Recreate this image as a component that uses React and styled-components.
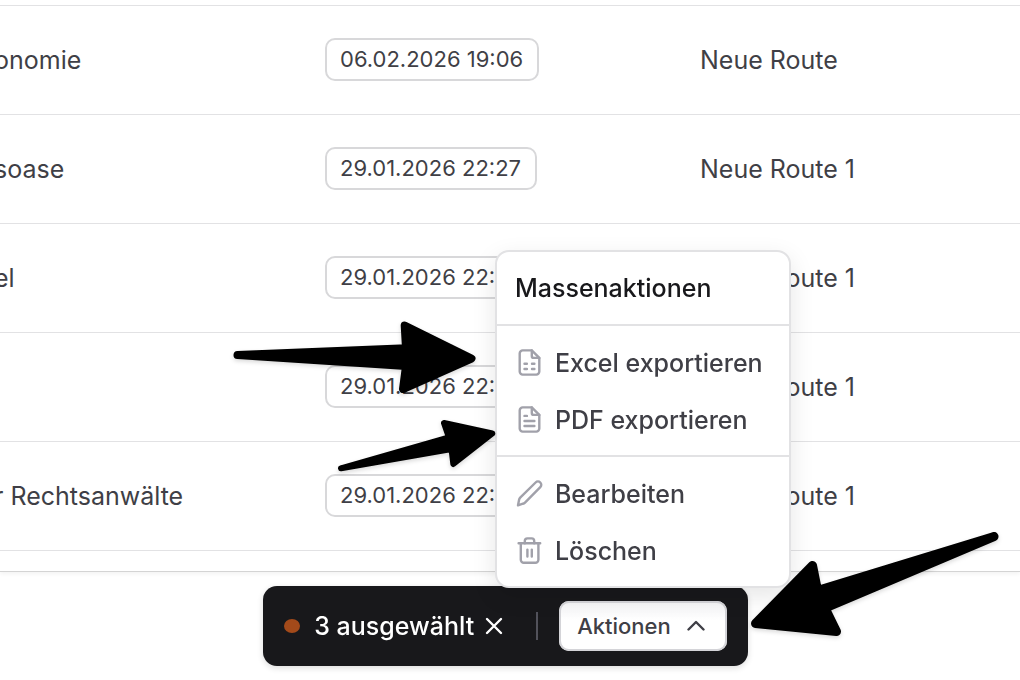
import styled, { createGlobalStyle } from 'styled-components';

const rows = [
  { name: 'onomie', date: '06.02.2026 19:06', route: 'Neue Route' },
  { name: 'soase', date: '29.01.2026 22:27', route: 'Neue Route 1' },
  { name: 'el', date: '29.01.2026 22:27', route: 'Neue Route 1' },
  { name: '', date: '29.01.2026 22:27', route: 'Neue Route 1' },
  { name: 'r Rechtsanwälte', date: '29.01.2026 22:27', route: 'Neue Route 1' },
];

const arrows = [
  {
    left: 233,
    top: 320,
    width: 244,
    height: 76,
    stroke: 8,
    points: '4.5,35 173,28.3 171.7,5.5 238.5,38.5 170,69 173,46',
  },
  {
    left: 336,
    top: 418,
    width: 160,
    height: 52,
    stroke: 6,
    points: '5,50.3 113,19.5 108,5 156.3,15.5 117.3,46 115.5,31',
  },
  {
    left: 749,
    top: 530,
    width: 252,
    height: 108,
    stroke: 9,
    points: '245,6.5 68.5,60.5 63.5,35.5 6.5,93.5 87.5,101.5 76,78',
  },
];

function App() {
  return (
    <>
      <GlobalStyle />
      <Page>
        <TableCard>
          <Table>
            <colgroup>
              <col className="name" />
              <col className="date" />
              <col />
            </colgroup>
            <tbody>
              {rows.map((row, index) => (
                <tr key={index}>
                  <td>{row.name}</td>
                  <td>
                    <DateBadge>{row.date}</DateBadge>
                  </td>
                  <td>{row.route}</td>
                </tr>
              ))}
            </tbody>
          </Table>
        </TableCard>
      </Page>
      <Dock>
        <SelectionBar>
          <Dot />
          <Count>3 ausgewählt</Count>
          <ClearButton aria-label="Auswahl aufheben">
            <CloseIcon />
          </ClearButton>
          <Divider />
          <ActionMenu />
        </SelectionBar>
      </Dock>
      {arrows.map((arrow) => (
        <Arrow key={arrow.left} {...arrow} />
      ))}
    </>
  );
}

function ActionMenu() {
  return (
    <MenuAnchor>
      <ActionButton aria-haspopup="menu" aria-expanded="true">
        Aktionen
        <ChevronIcon />
      </ActionButton>
      <Menu role="menu" aria-label="Massenaktionen">
        <MenuTitle>Massenaktionen</MenuTitle>
        <MenuSection>
          <MenuItem role="menuitem">
            <SheetIcon />
            Excel exportieren
          </MenuItem>
          <MenuItem role="menuitem">
            <DocumentIcon />
            PDF exportieren
          </MenuItem>
        </MenuSection>
        <MenuSection>
          <MenuItem role="menuitem">
            <PencilIcon />
            Bearbeiten
          </MenuItem>
          <MenuItem role="menuitem">
            <TrashIcon />
            Löschen
          </MenuItem>
        </MenuSection>
      </Menu>
    </MenuAnchor>
  );
}

function Arrow({ left, top, width, height, stroke, points }) {
  return (
    <ArrowSvg $left={left} $top={top} width={width} height={height} aria-hidden="true">
      <polygon points={points} strokeWidth={stroke} />
    </ArrowSvg>
  );
}

function SheetIcon() {
  return (
    <Icon viewBox="0 0 28 28">
      <path d="M16.8 1.4H7.7a3 3 0 0 0-3 3v18.2a3 3 0 0 0 3 3h13.6a3 3 0 0 0 3-3V8.9z" />
      <path d="M16.8 1.4v5.5a2 2 0 0 0 2 2h5.5" />
      <path d="M9.5 14.8h2.4M17 14.8h2.4M9.5 20h2.4M17 20h2.4" />
    </Icon>
  );
}

function DocumentIcon() {
  return (
    <Icon viewBox="0 0 28 28">
      <path d="M16.8 1.4H7.7a3 3 0 0 0-3 3v18.2a3 3 0 0 0 3 3h13.6a3 3 0 0 0 3-3V8.9z" />
      <path d="M16.8 1.4v5.5a2 2 0 0 0 2 2h5.5" />
      <path d="M9.5 9.9h2.4M9.5 15h9.9M9.5 20h9.9" />
    </Icon>
  );
}

function PencilIcon() {
  return (
    <Icon viewBox="0 0 28 28">
      <path d="M3 25.3l1.1-5.6a4 4 0 0 1 1.1-2.1L20.6 2.5a3.3 3.3 0 0 1 4.7 4.7L10 22.6a4 4 0 0 1-2.1 1.1z" />
    </Icon>
  );
}

function TrashIcon() {
  return (
    <Icon viewBox="0 0 28 28">
      <path d="M3.6 6.2h21.6M5.8 6.2v16.6a3 3 0 0 0 3 3h11.6a3 3 0 0 0 3-3V6.2" />
      <path d="M9.8 6.2V4A2.6 2.6 0 0 1 12.4 1.4h4.2a2.6 2.6 0 0 1 2.6 2.6v2.2" />
      <path d="M12.4 12.6v7M16.8 12.6v7" />
    </Icon>
  );
}

function CloseIcon() {
  return (
    <svg width="18" height="18" viewBox="0 0 18 18" aria-hidden="true">
      <path d="M2 2l14 14M16 2L2 16" />
    </svg>
  );
}

function ChevronIcon() {
  return (
    <svg width="18" height="12" viewBox="0 0 18 12" aria-hidden="true">
      <path d="M1.5 9.5L9 2l7.5 7.5" />
    </svg>
  );
}

const GlobalStyle = createGlobalStyle`
  * {
    box-sizing: border-box;
  }

  body {
    margin: 0;
    background: #fff;
    color: #3f3f46;
    font-family: Inter, "Liberation Sans", sans-serif;
    font-size: 25px;
    overflow: hidden;
  }

  button {
    border: none;
    padding: 0;
    background: none;
    color: inherit;
    font: inherit;
    cursor: pointer;
  }
`;

const Page = styled.main`
  min-height: 100vh;
  overflow: hidden;
`;

const TableCard = styled.section`
  padding: 5px 0 20px;
  border-bottom: 1px solid #d4d4d4;
  box-shadow: 0 2px 4px rgba(0, 0, 0, 0.05);
`;

const Table = styled.table`
  width: calc(100% + 6px);
  margin-left: -6px;
  table-layout: fixed;
  border-collapse: separate;
  border-spacing: 0;
  border-top: 1px solid #e2e2e4;

  .name {
    width: 316px;
  }

  .date {
    width: 375px;
  }

  td {
    height: 109px;
    padding: 0 15px 1px;
    border-bottom: 1px solid #e2e2e4;
    white-space: nowrap;
  }

  td:first-child {
    padding-left: 0;
  }
`;

const DateBadge = styled.span`
  display: flex;
  align-items: center;
  width: fit-content;
  height: 43px;
  padding: 0 14px 1px 13px;
  border: 2px solid #d8d8da;
  border-radius: 10px;
  font-size: 22px;
`;

const Dock = styled.div`
  position: fixed;
  right: 9px;
  bottom: 14px;
  left: 0;
  display: flex;
  justify-content: center;
`;

const SelectionBar = styled.div`
  display: flex;
  align-items: center;
  height: 80px;
  padding: 0 21px;
  border-radius: 14px;
  background: #18181b;
  color: #fff;
  font-weight: 500;
  box-shadow: 0 2px 6px rgba(0, 0, 0, 0.14);
`;

const Dot = styled.span`
  width: 16px;
  height: 14px;
  margin-right: 14px;
  border-radius: 50%;
  background: #a34a1a;
`;

const Count = styled.span`
  white-space: nowrap;
`;

const ClearButton = styled.button`
  display: flex;
  margin-left: 11px;

  path {
    fill: none;
    stroke: currentColor;
    stroke-width: 2.4;
    stroke-linecap: round;
  }
`;

const Divider = styled.span`
  width: 2px;
  height: 28px;
  margin: 0 21px 0 33px;
  background: #52525b;
`;

const MenuAnchor = styled.div`
  position: relative;
`;

const ActionButton = styled.button`
  display: flex;
  align-items: center;
  gap: 16px;
  height: 50px;
  padding: 0 22px 0 18px;
  border-radius: 10px;
  background: linear-gradient(#f4f4f5, #fff 40%);
  box-shadow: inset 0 0 0 2px #d4d4d8;
  color: #3f3f46;
  font-size: 22px;

  path {
    fill: none;
    stroke: currentColor;
    stroke-width: 2.4;
    stroke-linecap: round;
    stroke-linejoin: round;
  }
`;

const Menu = styled.div`
  position: absolute;
  bottom: calc(100% + 13px);
  left: 50%;
  width: 296px;
  transform: translateX(-50%);
  border: 2px solid #e2e2e4;
  border-radius: 14px;
  background: #fff;
  box-shadow: 0 8px 24px rgba(0, 0, 0, 0.1);
  color: #3f3f46;
`;

const MenuTitle = styled.div`
  display: flex;
  align-items: center;
  height: 72px;
  padding: 0 18px;
  color: #18181b;
`;

const MenuSection = styled.div`
  padding: 8px 0 7px;
  border-top: 2px solid #e2e2e4;
`;

const MenuItem = styled.button`
  display: flex;
  align-items: center;
  gap: 12px;
  width: 100%;
  height: 57px;
  padding: 0 18px;
  white-space: nowrap;
`;

const Icon = styled.svg.attrs({ 'aria-hidden': true })`
  flex: none;
  width: 28px;
  height: 28px;
  fill: none;
  stroke: #a1a1aa;
  stroke-width: 2.4;
  stroke-linecap: round;
  stroke-linejoin: round;
`;

const ArrowSvg = styled.svg`
  position: fixed;
  top: ${({ $top }) => $top}px;
  left: ${({ $left }) => $left}px;
  overflow: visible;
  fill: #000;
  stroke: #000;
  stroke-linejoin: round;
  filter: drop-shadow(0 2px 2px rgba(0, 0, 0, 0.15));
  pointer-events: none;
`;

export default App;
